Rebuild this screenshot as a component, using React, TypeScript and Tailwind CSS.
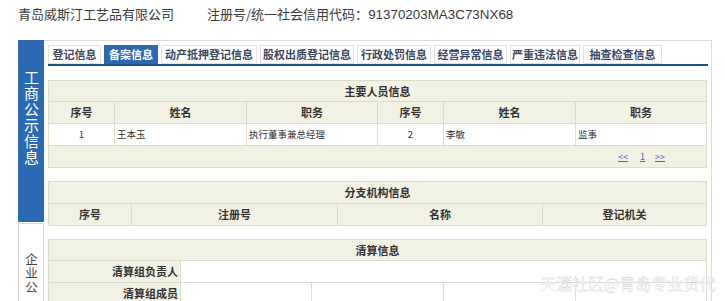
const tabs = [
  { label: '登记信息', w: 'w-[53px]' },
  { label: '备案信息', w: 'w-[54px]', active: true },
  { label: '动产抵押登记信息', w: 'w-[96px]' },
  { label: '股权出质登记信息', w: 'w-[94px]' },
  { label: '行政处罚信息', w: 'w-[74px]' },
  { label: '经营异常信息', w: 'w-[73px]' },
  { label: '严重违法信息', w: 'w-[70px]' },
  { label: '抽查检查信息', w: 'w-[79px]' },
];

const cjk = '[font-family:"Noto_Sans_CJK_SC","Liberation_Sans",sans-serif]';

const th = 'border border-[#dcdccc] bg-[#f1f1e4] text-center font-bold text-[11px] text-[#333]';
const td = 'border border-[#dcdccc] bg-white text-[9.5px] text-[#333]';

export default function App() {
  return (
    <div
      className={`relative h-[301px] w-[725px] overflow-hidden bg-white ${cjk}`}
    >
      {/* 顶部企业名称 */}
      <div className="flex h-[40px] items-start pl-[18px] pt-[4px] text-[13px] leading-[20px] text-[#3a3a3a]">
        <span>青岛威斯汀工艺品有限公司</span>
        <span className="ml-[33px]">
          注册号/统一社会信用代码：
          <span className="[font-family:'Liberation_Sans',sans-serif] text-[13.4px]">
            91370203MA3C73NX68
          </span>
        </span>
      </div>

      <div className="ml-[18px] flex w-[694px]">
        {/* 左侧栏 */}
        <div className="flex w-[26px] shrink-0 flex-col">
          <div className="flex h-[182px] justify-center bg-[#2b6ab2] pt-[30px]">
            <span className="text-[15px] leading-[26px] tracking-[1px] text-white [writing-mode:vertical-rl]">
              工商公示信息
            </span>
          </div>
          <div className="mt-[1px] flex h-[100px] justify-center border border-b-0 border-[#d8d8d8] pt-[29px]">
            <span className="text-[12.5px] leading-[24px] tracking-[1.5px] text-[#444] [writing-mode:vertical-rl]">
              企业公
            </span>
          </div>
        </div>

        {/* 右侧内容 */}
        <div className="flex-1 border-r border-t border-[#dcdcdc] pl-[4px] pr-[3px] pt-[4px]">
          <div className="flex gap-[3px] border-b-2 border-[#1d4e8c]">
            {tabs.map((t) => (
              <div
                key={t.label}
                className={`${t.w} flex h-[19px] items-center justify-center border text-[11px] font-bold ${
                  t.active
                    ? 'border-[#2b6ab2] bg-[#2b6ab2] text-white'
                    : 'border-[#e2e2e2] bg-white text-[#3b4763]'
                }`}
              >
                {t.label}
              </div>
            ))}
          </div>

          {/* 主要人员信息 */}
          <table className="mt-[14px] w-[658px] table-fixed border-collapse">
            <colgroup>
              <col className="w-[66px]" />
              <col className="w-[132px]" />
              <col className="w-[131px]" />
              <col className="w-[66px]" />
              <col className="w-[132px]" />
              <col className="w-[131px]" />
            </colgroup>
            <tbody>
              <tr className="h-[21px]">
                <th colSpan={6} className={th}>
                  主要人员信息
                </th>
              </tr>
              <tr className="h-[22px]">
                <th className={th}>序号</th>
                <th className={th}>姓名</th>
                <th className={th}>职务</th>
                <th className={th}>序号</th>
                <th className={th}>姓名</th>
                <th className={th}>职务</th>
              </tr>
              <tr className="h-[22px]">
                <td className={`${td} text-center`}>1</td>
                <td className={`${td} pl-[2px]`}>王本玉</td>
                <td className={`${td} pl-[2px]`}>执行董事兼总经理</td>
                <td className={`${td} text-center`}>2</td>
                <td className={`${td} pl-[2px]`}>李敏</td>
                <td className={`${td} pl-[2px]`}>监事</td>
              </tr>
              <tr className="h-[22px]">
                <td colSpan={6} className="border border-[#dcdccc] bg-[#f1f1e4] pr-[41px] text-right text-[9px] text-[#5b5bb0]">
                  <span className="underline">&lt;&lt;</span>
                  <span className="ml-[12px] underline">1</span>
                  <span className="ml-[10px] underline">&gt;&gt;</span>
                </td>
              </tr>
            </tbody>
          </table>

          {/* 分支机构信息 */}
          <table className="mt-[13px] w-[658px] table-fixed border-collapse">
            <colgroup>
              <col className="w-[83px]" />
              <col className="w-[206px]" />
              <col className="w-[205px]" />
              <col className="w-[164px]" />
            </colgroup>
            <tbody>
              <tr className="h-[22px]">
                <th colSpan={4} className={th}>
                  分支机构信息
                </th>
              </tr>
              <tr className="h-[22px]">
                <th className={th}>序号</th>
                <th className={th}>注册号</th>
                <th className={th}>名称</th>
                <th className={th}>登记机关</th>
              </tr>
            </tbody>
          </table>

          {/* 清算信息 */}
          <table className="mt-[13px] w-[658px] table-fixed border-collapse">
            <colgroup>
              <col className="w-[132px]" />
              <col className="w-[131px]" />
              <col className="w-[132px]" />
              <col className="w-[132px]" />
              <col className="w-[131px]" />
            </colgroup>
            <tbody>
              <tr className="h-[21px]">
                <th colSpan={5} className={th}>
                  清算信息
                </th>
              </tr>
              <tr className="h-[22px]">
                <th className={`${th} pr-[2px] !text-right`}>清算组负责人</th>
                <td colSpan={4} className={td}></td>
              </tr>
              <tr className="h-[22px]">
                <th className={`${th} pr-[2px] !text-right`}>清算组成员</th>
                <td className={td}></td>
                <td className={td}></td>
                <td className={td}></td>
                <td className={td}></td>
              </tr>
            </tbody>
          </table>
        </div>
      </div>

      {/* 水印 */}
      <div className="pointer-events-none absolute left-[540px] top-[273px] text-[16px] leading-[20px] text-[#fbfbfb] [-webkit-text-stroke:0.3px_#cdcdcd]">
        天涯社区@青岛专业货代
      </div>
    </div>
  );
}
